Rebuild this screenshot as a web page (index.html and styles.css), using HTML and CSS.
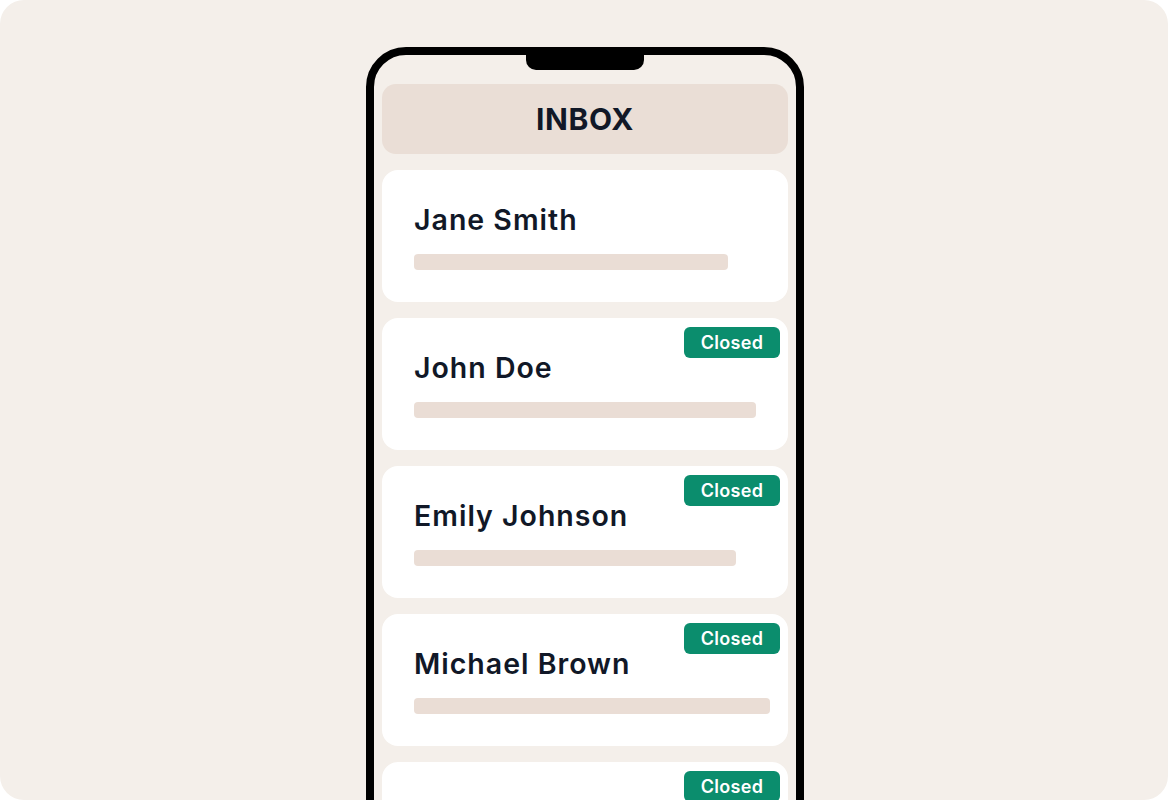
FILE: index.html
```html
<!DOCTYPE html>
<html>
<head>
<meta charset="utf-8">
<link rel="stylesheet" href="styles.css">
</head>
<body>
<div class="stage">
  <div class="phone">
    <div class="notch"></div>
    <div class="screen">
      <div class="header">INBOX</div>
      <div class="card">
        <div class="name">Jane Smith</div>
        <div class="bar" style="width:314px"></div>
      </div>
      <div class="card">
        <span class="badge">Closed</span>
        <div class="name">John Doe</div>
        <div class="bar" style="width:342px"></div>
      </div>
      <div class="card">
        <span class="badge">Closed</span>
        <div class="name">Emily Johnson</div>
        <div class="bar" style="width:322px"></div>
      </div>
      <div class="card">
        <span class="badge">Closed</span>
        <div class="name">Michael Brown</div>
        <div class="bar" style="width:356px"></div>
      </div>
      <div class="card">
        <span class="badge">Closed</span>
        <div class="name">Michael Brown</div>
        <div class="bar" style="width:330px"></div>
      </div>
    </div>
  </div>
</div>
</body>
</html>
```
FILE: styles.css
```css
html, body {
  margin: 0;
  padding: 0;
  background: #ffffff;
}
.stage {
  width: 1168px;
  height: 800px;
  box-sizing: border-box;
  padding-left: 2px;
  background: #f4efea;
  border-radius: 24px;
  overflow: hidden;
  display: flex;
  justify-content: center;
  font-family: Inter, "Noto Sans", sans-serif;
}
.phone {
  position: relative;
  margin-top: 47px;
  width: 422px;
  height: 900px;
  border: 8px solid #000;
  border-radius: 40px;
  flex: none;
  background: #f4efea;
}
.notch {
  position: absolute;
  top: 0;
  left: 152px;
  width: 118px;
  height: 15px;
  background: #000;
  border-radius: 0 0 10px 10px;
}
.screen {
  padding: 29px 8px 0;
  display: flex;
  flex-direction: column;
  gap: 16px;
}
.header {
  height: 70px;
  background: #eaded6;
  border-radius: 14px;
  display: flex;
  align-items: center;
  justify-content: center;
  font-size: 30px;
  font-weight: 700;
  color: #111827;
  letter-spacing: 0.6px;
}
.card {
  position: relative;
  background: #ffffff;
  border-radius: 16px;
  padding: 32px;
  display: flex;
  flex-direction: column;
  gap: 16px;
}
.name {
  font-size: 28.5px;
  line-height: 36px;
  font-weight: 600;
  color: #111827;
  letter-spacing: 1px;
}
.bar {
  height: 16px;
  background: #eaddd5;
  border-radius: 4px;
}
.badge {
  position: absolute;
  top: 9px;
  right: 8px;
  width: 96px;
  height: 31px;
  background: #0b8d6d;
  color: #ffffff;
  border-radius: 6px;
  font-size: 18px;
  font-weight: 600;
  letter-spacing: 0.3px;
  display: flex;
  align-items: center;
  justify-content: center;
}
```
